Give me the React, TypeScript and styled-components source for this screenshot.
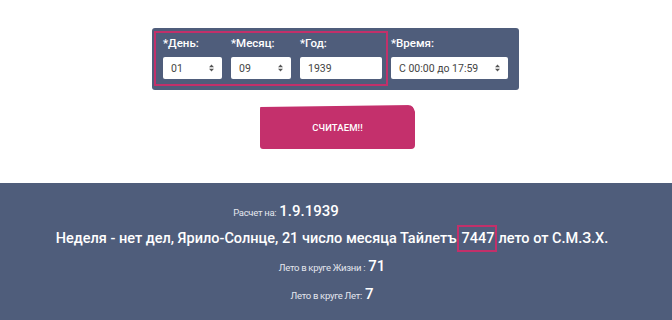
import styled, { createGlobalStyle } from "styled-components";

const GlobalStyle = createGlobalStyle`
  html, body {
    margin: 0;
    padding: 0;
    background: #ffffff;
    font-family: Roboto, "Liberation Sans", sans-serif;
  }
`;

const Page = styled.div`
  width: 672px;
  height: 320px;
  overflow: hidden;
  display: flex;
  flex-direction: column;
  align-items: center;
`;

const FormPanel = styled.div`
  margin-top: 28px;
  margin-left: -1px;
  width: 367px;
  box-sizing: border-box;
  padding: 3px 11px 4px 2px;
  background: #4f5d7b;
  border-radius: 3px;
  display: flex;
  align-items: flex-start;
  gap: 3px;
`;

const DateGroup = styled.div`
  display: flex;
  flex-shrink: 0;
  gap: 9px;
  padding: 4px 4px 5px 7px;
  border: 2px solid #c2306a;
`;

const Field = styled.div<{ $w: number }>`
  display: flex;
  flex-direction: column;
  flex-shrink: 0;
  width: ${(p) => p.$w}px;
`;

const TimeField = styled(Field)`
  padding-top: 6px;
`;

const Label = styled.label`
  color: #ffffff;
  font-size: 11.5px;
  font-weight: 500;
  line-height: 13px;
  height: 13px;
  margin-bottom: 7px;
`;

const Box = styled.div`
  height: 22px;
  background: #ffffff;
  border-radius: 2px;
  display: flex;
  align-items: center;
  justify-content: space-between;
  padding: 0 8px 0 8px;
  box-sizing: border-box;
  font-size: 10.5px;
  color: #444;
`;

const Button = styled.button`
  margin-top: 15px;
  margin-left: 3px;
  width: 155px;
  height: 44px;
  border: none;
  border-radius: 4px 7px 4px 3px;
  background: #c4306c;
  color: #ffffff;
  font-family: Roboto, "Liberation Sans", sans-serif;
  font-size: 9.5px;
  font-weight: 500;
  letter-spacing: 0.1px;
  clip-path: polygon(0 2px, 152px 0, 155px 6px, 155px 100%, 0 100%);
`;

const Result = styled.div`
  margin-top: 34px;
  width: 672px;
  flex: 1;
  background: #4f5d7b;
  display: flex;
  flex-direction: column;
  align-items: center;
  padding: 14px 8px 0 0;
  box-sizing: border-box;
  color: #ffffff;
`;

const Line = styled.div<{ $shift?: number }>`
  display: flex;
  align-items: baseline;
  justify-content: center;
  margin-right: ${(p) => p.$shift ?? 0}px;
  height: 28px;
  line-height: 28px;
`;

const Small = styled.span`
  font-size: 9.5px;
  color: #e4e7ee;
  letter-spacing: -0.3px;
  margin-right: 3px;
`;

const Value = styled.span`
  font-size: 15px;
  font-weight: 500;
`;

const Main = styled.div`
  font-size: 14.5px;
  font-weight: 500;
  height: 27px;
  display: flex;
  align-items: center;
  white-space: pre;
`;

const Boxed = styled.span`
  border: 2px solid #c2306a;
  padding: 4px 1px 4px 2px;
  margin: 0 1px;
  line-height: 15px;
`;

function Arrows() {
  return (
    <svg width="5" height="8" viewBox="0 0 5 8">
      <path d="M2.5 0.5 L5 3.2 H0 Z M0 4.8 H5 L2.5 7.5 Z" fill="#555" />
    </svg>
  );
}

export default function App() {
  return (
    <Page>
      <GlobalStyle />
      <FormPanel>
        <DateGroup>
          <Field $w={59}>
            <Label>*День:</Label>
            <Box>
              01 <Arrows />
            </Box>
          </Field>
          <Field $w={60}>
            <Label>*Месяц:</Label>
            <Box>
              09 <Arrows />
            </Box>
          </Field>
          <Field $w={82}>
            <Label>*Год:</Label>
            <Box>1939</Box>
          </Field>
        </DateGroup>
        <TimeField $w={117}>
          <Label>*Время:</Label>
          <Box>
            С 00:00 до 17:59 <Arrows />
          </Box>
        </TimeField>
      </FormPanel>
      <Button>СЧИТАЕМ!!</Button>
      <Result>
        <Line $shift={92}>
          <Small>Расчет на:</Small>
          <Value>1.9.1939</Value>
        </Line>
        <Main>
          Неделя - нет дел, Ярило-Солнце, 21 число месяца Тайлетъ<Boxed>7447</Boxed>лето от С.М.З.Х.
        </Main>
        <Line>
          <Small>Лето в круге Жизни :</Small>
          <Value>71</Value>
        </Line>
        <Line>
          <Small>Лето в круге Лет:</Small>
          <Value>7</Value>
        </Line>
      </Result>
    </Page>
  );
}
